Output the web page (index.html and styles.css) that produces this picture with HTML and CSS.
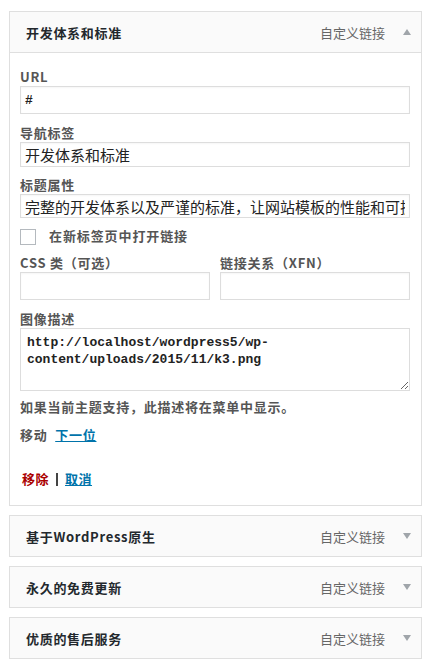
FILE: index.html
```html
<!DOCTYPE html>
<html lang="zh-CN">
<head>
  <meta charset="UTF-8" />
  <meta name="viewport" content="width=device-width, initial-scale=1.0"/>
  <title>菜单项</title>
  <link rel="stylesheet" href="styles.css">
</head>
<body>
  <div class="menu">

    <div class="item open">
      <div class="item-bar">
        <span class="item-title">开发体系和标准</span>
        <span class="item-type">自定义链接</span>
        <span class="arrow up"></span>
      </div>
      <div class="item-settings">
        <label class="field-label lbl-url">URL</label>
        <input type="text" class="txt txt-url" value="#" />

        <label class="field-label gap10">导航标签</label>
        <input type="text" class="txt txt-nav" value="开发体系和标准" />

        <label class="field-label gap9">标题属性</label>
        <input type="text" class="txt txt-title" value="完整的开发体系以及严谨的标准，让网站模板的性能和可扩展性" />

        <div class="check-row">
          <span class="checkbox"></span>
          <span class="check-text">在新标签页中打开链接</span>
        </div>

        <div class="two-col">
          <div class="col">
            <label class="field-label">CSS 类（可选）</label>
            <input type="text" class="txt txt-half" />
          </div>
          <div class="col">
            <label class="field-label">链接关系（XFN）</label>
            <input type="text" class="txt txt-half" />
          </div>
        </div>

        <label class="field-label gap10">图像描述</label>
        <textarea class="desc">http://localhost/wordpress5/wp-content/uploads/2015/11/k3.png</textarea>
        <p class="hint">如果当前主题支持，此描述将在菜单中显示。</p>

        <p class="move">移动 <a href="#">下一位</a></p>

        <p class="actions"><a href="#" class="remove">移除</a><span class="sep"></span><a href="#" class="cancel">取消</a></p>
      </div>
    </div>

    <div class="item">
      <div class="item-bar">
        <span class="item-title">基于WordPress原生</span>
        <span class="item-type">自定义链接</span>
        <span class="arrow"></span>
      </div>
    </div>

    <div class="item">
      <div class="item-bar">
        <span class="item-title">永久的免费更新</span>
        <span class="item-type">自定义链接</span>
        <span class="arrow"></span>
      </div>
    </div>

    <div class="item">
      <div class="item-bar">
        <span class="item-title">优质的售后服务</span>
        <span class="item-type">自定义链接</span>
        <span class="arrow"></span>
      </div>
    </div>

  </div>
</body>
</html>
```
FILE: styles.css
```css
* {
  box-sizing: border-box;
}
body {
  margin: 0;
  background: #fff;
  font-family: "Noto Sans CJK SC", "Liberation Sans", sans-serif;
  font-size: 13px;
  color: #555;
}
.menu {
  padding: 11px 3px 0 9px;
}
.item {
  border: 1px solid #dfdfdf;
  background: #fff;
  margin-bottom: 9px;
}
.item-bar {
  display: flex;
  align-items: center;
  height: 40px;
  padding: 0 10px 0 16px;
  background: #fafafa;
}
.item.open .item-bar {
  border-bottom: 1px solid #dfdfdf;
  height: 41px;
}
.item-title {
  flex: 1;
  font-weight: bold;
  color: #23282d;
  letter-spacing: 0.7px;
}
.item-type {
  color: #666;
  margin-right: 18px;
}
.arrow {
  width: 0;
  height: 0;
  border-left: 4px solid transparent;
  border-right: 4px solid transparent;
  border-top: 6px solid #a0a5aa;
}
.arrow.up {
  border-top: none;
  border-bottom: 6px solid #a0a5aa;
}
.item-settings {
  padding: 15px 11px 17px 10px;
}
.field-label {
  display: block;
  line-height: 18px;
  font-weight: bold;
  letter-spacing: 0.75px;
  color: #555;
}
.gap10 {
  margin-top: 10px;
}
.gap9 {
  margin-top: 9px;
}
.txt {
  display: block;
  width: 100%;
  margin: 0;
  border: 1px solid #ddd;
  box-shadow: inset 0 1px 2px rgba(0,0,0,0.04);
  padding: 0 4px;
  font-family: "Noto Sans CJK SC", sans-serif;
  font-size: 15px;
  color: #222;
  background: #fff;
  white-space: nowrap;
  overflow: hidden;
}
.txt-url {
  height: 28px;
  font-family: "Liberation Mono", monospace;
  font-weight: bold;
  font-size: 13px;
}
.txt-nav {
  height: 25px;
}
.txt-title {
  height: 24px;
}
.txt-half {
  height: 28px;
}
.check-row {
  display: flex;
  align-items: center;
  margin-top: 11px;
  height: 16px;
}
.checkbox {
  width: 16px;
  height: 16px;
  border: 1px solid #b4b9be;
  background: #fff;
  margin-right: 13px;
}
.check-text {
  font-weight: bold;
  letter-spacing: 0.9px;
  line-height: 16px;
  margin-top: -3px;
}
.two-col {
  display: flex;
  gap: 10px;
  margin-top: 9px;
}
.col {
  flex: 1;
}
.desc {
  display: block;
  width: 100%;
  height: 63px;
  margin: 0;
  padding: 5px 6px;
  border: 1px solid #ddd;
  font-family: "Liberation Mono", "Noto Sans CJK SC", monospace;
  font-weight: bold;
  font-size: 13px;
  line-height: 17px;
  color: #222;
  word-break: normal;
  overflow-wrap: normal;
}
.hint {
  margin: 7px 0 0;
  line-height: 18px;
  font-weight: bold;
  letter-spacing: 0.75px;
}
.move {
  margin: 10px 0 0;
  line-height: 18px;
  font-weight: bold;
  letter-spacing: 0.75px;
}
.move a {
  margin-left: 4px;
  color: #0073aa;
}
.actions {
  margin: 26px 0 0 2px;
  line-height: 18px;
  font-weight: bold;
  display: flex;
  align-items: center;
}
.remove {
  color: #a00;
  text-decoration: none;
  letter-spacing: 0.5px;
}
.sep {
  width: 2px;
  height: 13px;
  background: #444;
  margin: 0 7px;
}
.cancel {
  color: #0073aa;
  letter-spacing: 0.5px;
}
```
